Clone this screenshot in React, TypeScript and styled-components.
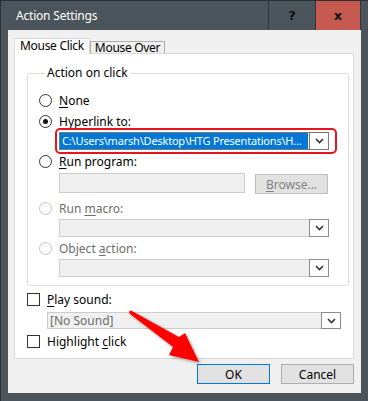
import styled, { createGlobalStyle } from "styled-components";

const GlobalStyle = createGlobalStyle`
  html, body {
    margin: 0;
    padding: 0;
    background: #ffffff;
  }
  * {
    box-sizing: border-box;
  }
`;

const Window = styled.div`
  position: relative;
  width: 368px;
  height: 401px;
  display: flex;
  flex-direction: column;
  background: #4b555b;
  border-top: 1px solid #2b3034;
  border-left: 1px solid #2b3034;
  font-family: "Noto Sans", "Liberation Sans", sans-serif;
  font-size: 12px;
  color: #000;
`;

const TitleBar = styled.div`
  height: 29px;
  display: flex;
  align-items: center;
  padding-right: 7px;
`;

const Title = styled.div`
  flex: 1;
  padding-left: 15px;
  color: #ffffff;
  font-size: 12px;
  letter-spacing: -0.2px;
`;

const CaptionButton = styled.div<{ $close?: boolean }>`
  width: ${(p) => (p.$close ? 46 : 47)}px;
  height: 29px;
  display: flex;
  align-items: center;
  justify-content: center;
  background: ${(p) => (p.$close ? "#c75a50" : "#4b555b")};
  border-left: 1px solid #30373b;
  border-right: ${(p) => (p.$close ? "1px solid #30373b" : "none")};
  font-family: "DejaVu Sans", sans-serif;
  font-weight: bold;
  font-size: 13px;
  color: #111;
`;

const Client = styled.div`
  flex: 1;
  margin: 0 7px 8px 7px;
  background: #f0f0f0;
  padding: 8px 7px 0 6px;
  display: flex;
  flex-direction: column;
`;

const TabStrip = styled.div`
  display: flex;
  align-items: flex-end;
  height: 15px;
  position: relative;
  z-index: 1;
`;

const Tab = styled.div<{ $active?: boolean }>`
  height: ${(p) => (p.$active ? 16 : 12)}px;
  margin-bottom: ${(p) => (p.$active ? -1 : 0)}px;
  padding: 0 ${(p) => (p.$active ? 5 : 4)}px;
  display: flex;
  align-items: ${(p) => (p.$active ? "flex-start" : "center")};
  background: ${(p) => (p.$active ? "#ffffff" : "#f0f0f0")};
  border: 1px solid ${(p) => (p.$active ? "#d9d9d9" : "#adadad")};
  border-bottom: none;
  line-height: 14px;
  letter-spacing: -0.3px;
  white-space: nowrap;
`;

const Panel = styled.div`
  width: 340px;
  height: 306px;
  background: #ffffff;
  border: 1px solid #d9d9d9;
  padding: 11px 12px 0 12px;
  display: flex;
  flex-direction: column;
`;

const Group = styled.fieldset`
  margin: 0;
  padding: 8px 11px 8px 11px;
  border: 1px solid #dcdcdc;
  border-radius: 3px;
  display: flex;
  flex-direction: column;
  align-items: flex-start;
`;

const Legend = styled.legend`
  margin-left: 6px;
  padding: 0 2px;
  line-height: 16px;
`;

const OptionRow = styled.div<{ $mt?: number; $disabled?: boolean }>`
  display: flex;
  align-items: center;
  gap: 7px;
  height: 16px;
  margin-top: ${(p) => p.$mt ?? 0}px;
  color: ${(p) => (p.$disabled ? "#6d6d6d" : "#000")};
  white-space: nowrap;
`;

const Radio = styled.span<{ $checked?: boolean; $disabled?: boolean }>`
  width: 13px;
  height: 13px;
  border-radius: 50%;
  border: 1px solid ${(p) => (p.$disabled ? "#c4c4c4" : "#333")};
  background: #fff;
  display: flex;
  align-items: center;
  justify-content: center;
  flex: none;
  &::after {
    content: "";
    display: ${(p) => (p.$checked ? "block" : "none")};
    width: 5px;
    height: 5px;
    border-radius: 50%;
    background: #111;
  }
`;

const Check = styled.span`
  width: 13px;
  height: 13px;
  border: 1px solid #333;
  background: #fff;
  flex: none;
`;

const Key = styled.span`
  text-decoration: underline;
  text-underline-offset: 2px;
`;

const Ring = styled.div`
  margin: -1px 0 0 16px;
  padding: 2px 6px 2px 2px;
  border: 2px solid #e8141b;
  border-radius: 5px;
  display: flex;
`;

const Combo = styled.div<{ $width: number; $height?: number; $disabled?: boolean; $mt?: number }>`
  width: ${(p) => p.$width}px;
  height: ${(p) => p.$height ?? 18}px;
  margin-top: ${(p) => p.$mt ?? 0}px;
  margin-left: ${(p) => (p.$mt !== undefined ? 20 : 0)}px;
  display: flex;
  border: 1px solid ${(p) => (p.$disabled ? "#cccccc" : "#7a7a7a")};
  background: ${(p) => (p.$disabled ? "#f0f0f0" : "#ffffff")};
  flex: none;
`;

const ComboText = styled.div<{ $selected?: boolean; $disabled?: boolean }>`
  flex: 1;
  min-width: 0;
  display: flex;
  align-items: center;
  padding-left: 2px;
  background: ${(p) => (p.$selected ? "#0078d7" : "transparent")};
  color: ${(p) => (p.$selected ? "#ffffff" : p.$disabled ? "#6d6d6d" : "#000")};
  font-size: ${(p) => (p.$selected ? 11 : 12)}px;
  letter-spacing: ${(p) => (p.$selected ? -0.2 : 0)}px;
  white-space: nowrap;
  overflow: hidden;
  line-height: 14px;
`;

const ArrowBox = styled.div<{ $disabled?: boolean }>`
  width: 20px;
  flex: none;
  margin: -1px -1px -1px 1px;
  display: flex;
  align-items: center;
  justify-content: center;
  background: #ffffff;
  border: 1px solid ${(p) => (p.$disabled ? "#8c8c8c" : "#7a7a7a")};
`;

const ProgramRow = styled.div`
  display: flex;
  align-items: flex-start;
  gap: 10px;
  margin: 4px 0 0 20px;
`;

const TextField = styled.div`
  width: 186px;
  height: 20px;
  background: #f0f0f0;
  border: 1px solid #cccccc;
`;

const Button = styled.div<{ $default?: boolean; $disabled?: boolean; $mt?: number }>`
  width: 73px;
  height: 20px;
  margin-top: ${(p) => p.$mt ?? 0}px;
  display: flex;
  align-items: center;
  justify-content: center;
  background: #e1e1e1;
  border: 1px solid ${(p) => (p.$default ? "#0078d7" : p.$disabled ? "#bfbfbf" : "#adadad")};
  color: ${(p) => (p.$disabled ? "#838383" : "#000")};
`;

const Footer = styled.div`
  display: flex;
  justify-content: flex-end;
  gap: 11px;
  margin-top: 5px;
`;

const ArrowOverlay = styled.svg`
  position: absolute;
  left: 0;
  top: 0;
  width: 368px;
  height: 401px;
  pointer-events: none;
`;

function Chevron() {
  return (
    <svg width="9" height="6" viewBox="0 0 9 6">
      <polyline points="1,1 4.5,4.5 8,1" fill="none" stroke="#333" strokeWidth="1.6" />
    </svg>
  );
}

export default function App() {
  return (
    <>
      <GlobalStyle />
      <Window>
        <TitleBar>
          <Title>Action Settings</Title>
          <CaptionButton>?</CaptionButton>
          <CaptionButton $close>x</CaptionButton>
        </TitleBar>
        <Client>
          <TabStrip>
            <Tab $active>Mouse Click</Tab>
            <Tab>Mouse Over</Tab>
          </TabStrip>
          <Panel>
            <Group>
              <Legend>Action on click</Legend>
              <OptionRow $mt={3}>
                <Radio />
                <span>
                  <Key>N</Key>one
                </span>
              </OptionRow>
              <OptionRow $mt={5}>
                <Radio $checked />
                <span>
                  <Key>H</Key>yperlink to:
                </span>
              </OptionRow>
              <Ring>
                <Combo $width={270}>
                  <ComboText $selected>C:\Users\marsh\Desktop\HTG Presentations\H...</ComboText>
                  <ArrowBox>
                    <Chevron />
                  </ArrowBox>
                </Combo>
              </Ring>
              <OptionRow $mt={-1}>
                <Radio />
                <span>
                  <Key>R</Key>un program:
                </span>
              </OptionRow>
              <ProgramRow>
                <TextField />
                <Button $disabled $mt={1}>
                  <span>
                    <Key>B</Key>rowse...
                  </span>
                </Button>
              </ProgramRow>
              <OptionRow $mt={6} $disabled>
                <Radio $disabled />
                <span>
                  Run <Key>m</Key>acro:
                </span>
              </OptionRow>
              <Combo $width={270} $disabled $mt={3}>
                <ComboText $disabled />
                <ArrowBox $disabled>
                  <Chevron />
                </ArrowBox>
              </Combo>
              <OptionRow $mt={3} $disabled>
                <Radio $disabled />
                <span>
                  Object <Key>a</Key>ction:
                </span>
              </OptionRow>
              <Combo $width={270} $disabled $mt={3}>
                <ComboText $disabled />
                <ArrowBox $disabled>
                  <Chevron />
                </ArrowBox>
              </Combo>
            </Group>
            <OptionRow $mt={5}>
              <Check />
              <span>
                <Key>P</Key>lay sound:
              </span>
            </OptionRow>
            <Combo $width={294} $height={17} $disabled $mt={5}>
              <ComboText $disabled>[No Sound]</ComboText>
              <ArrowBox $disabled>
                <Chevron />
              </ArrowBox>
            </Combo>
            <OptionRow $mt={4}>
              <Check />
              <span>
                Highlight <Key>c</Key>lick
              </span>
            </OptionRow>
          </Panel>
          <Footer>
            <Button $default>OK</Button>
            <Button>Cancel</Button>
          </Footer>
        </Client>
        <ArrowOverlay viewBox="0 0 368 401">
          <defs>
            <filter id="arrowShadow" x="-20%" y="-20%" width="140%" height="140%">
              <feDropShadow dx="1.5" dy="1.5" stdDeviation="1.5" floodColor="#000" floodOpacity="0.35" />
            </filter>
          </defs>
          <path
            d="M129,310 Q128,309 131,310 L178,336 L184,332 L198,361 L168,354 L172,346 L129,313 Q127,311 129,310 Z"
            fill="#ff0000"
            filter="url(#arrowShadow)"
          />
        </ArrowOverlay>
      </Window>
    </>
  );
}
